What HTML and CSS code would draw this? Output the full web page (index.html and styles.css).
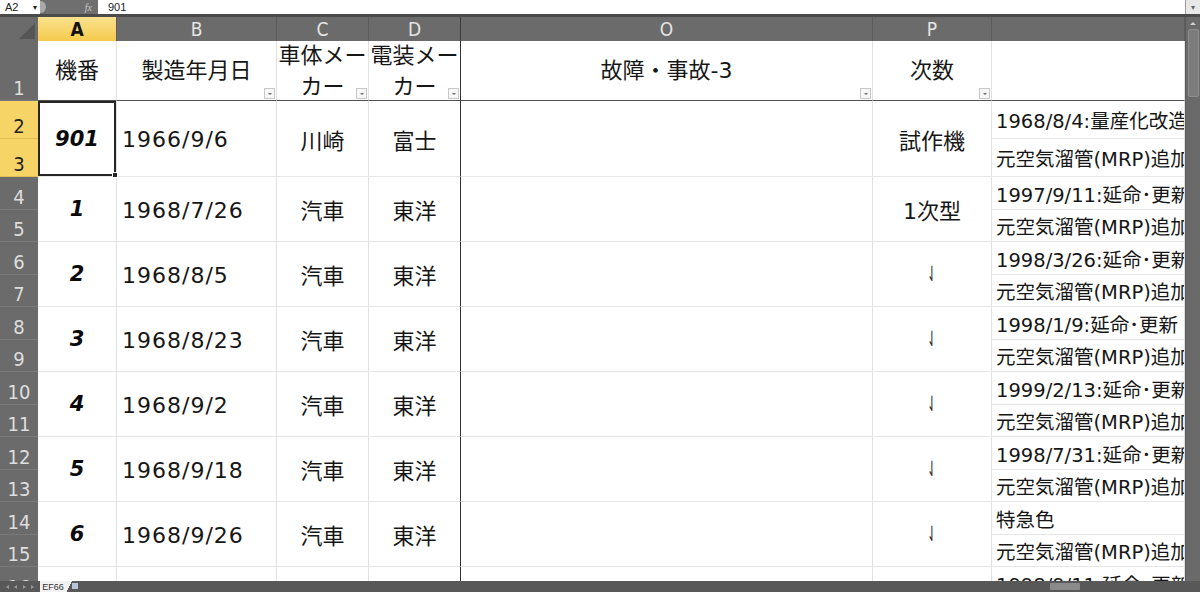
FILE: index.html
```html
<!DOCTYPE html>
<html lang="ja">
<head>
<meta charset="utf-8">
<title>EF66</title>
<link rel="stylesheet" href="styles.css">
</head>
<body>
<div class="app">
  <div class="fbar">
    <div class="namebox"><span>A2</span><span class="nb-arrow">▾</span></div>
    <div class="fxarea"><span class="knob"></span><span class="fx">fx</span></div>
    <div class="formula">901</div>
    <div class="fexpand"><span>▾</span></div>
  </div>
  <div class="main">
    <div class="sheet">
      <!-- column headers -->
      <div class="corner"></div>
      <div class="ch sel">A</div>
      <div class="ch">B</div>
      <div class="ch">C</div>
      <div class="ch chD">D</div>
      <div class="ch">O</div>
      <div class="ch">P</div>
      <div class="ch"></div>

      <!-- row 1 -->
      <div class="rh">1</div>
      <div class="c hdr">機番</div>
      <div class="c hdr">製造年月日<span class="flt"></span></div>
      <div class="c hdr">車体メー<br>カー<span class="flt"></span></div>
      <div class="c hdr sepD">電装メー<br>カー<span class="flt"></span></div>
      <div class="c hdr">故障・事故-3<span class="flt"></span></div>
      <div class="c hdr">次数<span class="flt"></span></div>
      <div class="c hdr"></div>

      <!-- rows 2-3 -->
      <div class="rh sel">2</div>
      <div class="c span2 ctr num sel-cell">901</div>
      <div class="c span2 left">1966/9/6</div>
      <div class="c span2 ctr">川崎</div>
      <div class="c span2 ctr sepD">富士</div>
      <div class="c span2"></div>
      <div class="c span2 ctr">試作機</div>
      <div class="c note">1968/8/4:量産化改造</div>
      <div class="rh sel last">3</div>
      <div class="c note">元空気溜管(MRP)追加</div>

      <!-- rows 4-5 -->
      <div class="rh">4</div>
      <div class="c span2 ctr num">1</div>
      <div class="c span2 left">1968/7/26</div>
      <div class="c span2 ctr">汽車</div>
      <div class="c span2 ctr sepD">東洋</div>
      <div class="c span2"></div>
      <div class="c span2 ctr">1次型</div>
      <div class="c note">1997/9/11:延命･更新</div>
      <div class="rh">5</div>
      <div class="c note">元空気溜管(MRP)追加</div>

      <!-- rows 6-7 -->
      <div class="rh">6</div>
      <div class="c span2 ctr num">2</div>
      <div class="c span2 left">1968/8/5</div>
      <div class="c span2 ctr">汽車</div>
      <div class="c span2 ctr sepD">東洋</div>
      <div class="c span2"></div>
      <div class="c span2 ctr"><span class="ditto">⇃</span></div>
      <div class="c note">1998/3/26:延命･更新</div>
      <div class="rh">7</div>
      <div class="c note">元空気溜管(MRP)追加</div>

      <!-- rows 8-9 -->
      <div class="rh">8</div>
      <div class="c span2 ctr num">3</div>
      <div class="c span2 left">1968/8/23</div>
      <div class="c span2 ctr">汽車</div>
      <div class="c span2 ctr sepD">東洋</div>
      <div class="c span2"></div>
      <div class="c span2 ctr"><span class="ditto">⇃</span></div>
      <div class="c note">1998/1/9:延命･更新</div>
      <div class="rh">9</div>
      <div class="c note">元空気溜管(MRP)追加</div>

      <!-- rows 10-11 -->
      <div class="rh">10</div>
      <div class="c span2 ctr num">4</div>
      <div class="c span2 left">1968/9/2</div>
      <div class="c span2 ctr">汽車</div>
      <div class="c span2 ctr sepD">東洋</div>
      <div class="c span2"></div>
      <div class="c span2 ctr"><span class="ditto">⇃</span></div>
      <div class="c note">1999/2/13:延命･更新</div>
      <div class="rh">11</div>
      <div class="c note">元空気溜管(MRP)追加</div>

      <!-- rows 12-13 -->
      <div class="rh">12</div>
      <div class="c span2 ctr num">5</div>
      <div class="c span2 left">1968/9/18</div>
      <div class="c span2 ctr">汽車</div>
      <div class="c span2 ctr sepD">東洋</div>
      <div class="c span2"></div>
      <div class="c span2 ctr"><span class="ditto">⇃</span></div>
      <div class="c note">1998/7/31:延命･更新</div>
      <div class="rh">13</div>
      <div class="c note">元空気溜管(MRP)追加</div>

      <!-- rows 14-15 -->
      <div class="rh">14</div>
      <div class="c span2 ctr num">6</div>
      <div class="c span2 left">1968/9/26</div>
      <div class="c span2 ctr">汽車</div>
      <div class="c span2 ctr sepD">東洋</div>
      <div class="c span2"></div>
      <div class="c span2 ctr"><span class="ditto">⇃</span></div>
      <div class="c note">特急色</div>
      <div class="rh">15</div>
      <div class="c note">元空気溜管(MRP)追加</div>

      <!-- rows 16-17 -->
      <div class="rh">16</div>
      <div class="c span2"></div>
      <div class="c span2"></div>
      <div class="c span2"></div>
      <div class="c span2 sepD"></div>
      <div class="c span2"></div>
      <div class="c span2"></div>
      <div class="c note">1998/9/11:延命･更新</div>
      <div class="rh">17</div>
      <div class="c note">元空気溜管(MRP)追加</div>
    </div>
    <div class="vscroll">
      <span class="up"></span>
      <span class="thumb"></span>
    </div>
  </div>
  <div class="tabs">
    <div class="tabnav"><span class="nv l"></span><span class="nv l"></span><span class="nv r"></span><span class="nv r"></span></div>
    <div class="tab">EF66</div>
    <div class="newsheet"></div>
    <div class="hspace"></div>
    <div class="hthumb"></div>
    <div class="hend"></div>
  </div>
</div>
</body>
</html>
```

FILE: styles.css
```css
html, body {
  margin: 0;
  padding: 0;
}
body {
  width: 1200px;
  height: 592px;
  overflow: hidden;
  background: #ffffff;
  font-family: "DejaVu Sans", "Noto Sans CJK JP", sans-serif;
  color: #161616;
}
.app {
  display: flex;
  flex-direction: column;
  width: 1200px;
  height: 592px;
}

/* formula bar */
.fbar {
  display: flex;
  height: 14px;
  border-bottom: 3px solid #4a4a4a;
  font: 11px "Liberation Sans", sans-serif;
  color: #222;
}
.namebox {
  width: 40px;
  box-sizing: border-box;
  padding: 0 3px 0 5px;
  display: flex;
  align-items: center;
  justify-content: space-between;
  background: #fff;
}
.nb-arrow {
  font-size: 8px;
}
.fxarea {
  width: 58px;
  background: #6f6f6f;
  position: relative;
  display: flex;
  align-items: center;
  justify-content: flex-end;
  padding-right: 6px;
  box-sizing: border-box;
  overflow: hidden;
}
.knob {
  position: absolute;
  left: -5px;
  top: 1px;
  width: 11px;
  height: 12px;
  border-radius: 50%;
  background: #a9a9a9;
}
.fx {
  font: italic 10px "Liberation Serif", serif;
  color: #c9c9c9;
}
.formula {
  flex: 1;
  background: #fff;
  padding-left: 10px;
  display: flex;
  align-items: center;
}
.fexpand {
  width: 14px;
  background: #e8e8e8;
  border-left: 1px solid #9a9a9a;
  display: flex;
  align-items: center;
  justify-content: center;
  font-size: 8px;
  color: #666;
}

/* main area */
.main {
  display: flex;
  height: 564px;
  overflow: hidden;
}
.sheet {
  width: 1185px;
  height: 564px;
  overflow: hidden;
  display: grid;
  grid-template-columns: 38px 79px 160px 92px 92px 412px 119px 193px;
  grid-template-rows: 24px 60px 38px 38px repeat(7, 33px 32px);
  align-content: start;
}

/* column headers */
.corner {
  background: #6b6b6b;
  position: relative;
}
.corner::after {
  content: "";
  position: absolute;
  right: 3px;
  bottom: 2px;
  width: 16px;
  height: 16px;
  background: #555555;
  clip-path: polygon(100% 0, 100% 100%, 0 100%);
}
.ch {
  background: #6b6b6b;
  color: #e4e4e4;
  font: 19px "Liberation Sans Narrow", "DejaVu Sans Condensed", sans-serif;
  line-height: 24px;
  text-align: center;
  border-right: 1px solid #5c5c5c;
  box-sizing: border-box;
}
.ch.sel {
  background: linear-gradient(#fbe190, #f4cb4c);
  color: #111;
  font-weight: bold;
}
.ch.chD {
  border-right-color: #3c3c3c;
}

/* row headers */
.rh {
  grid-column: 1;
  background: #6b6b6b;
  color: #dedede;
  font: 20px "Liberation Sans Narrow", "DejaVu Sans Condensed", sans-serif;
  display: flex;
  align-items: flex-end;
  justify-content: center;
  padding-bottom: 1px;
  box-sizing: border-box;
  border-bottom: 1px solid #7a7a7a;
  line-height: 22px;
}
.rh.sel {
  background: #f6d466;
  color: #222;
  border-bottom-color: #e2bd52;
}

/* cells */
.c {
  display: flex;
  align-items: center;
  position: relative;
  box-sizing: border-box;
  border-right: 1px solid #e1e1e1;
  border-bottom: 1px solid #e6e6e6;
  font-size: 22px;
  white-space: nowrap;
  overflow: hidden;
  color: #161616;
}
.span2 {
  grid-row: span 2;
}
.ctr {
  justify-content: center;
}
.left {
  padding-left: 5px;
  padding-top: 2px;
  letter-spacing: 1px;
}
.hdr {
  justify-content: center;
  text-align: center;
  line-height: 31px;
  border-bottom: 1px solid #505050;
  overflow: visible;
}
.sepD {
  border-right: 1px solid #333333;
}
.num {
  font: italic bold 21px "DejaVu Sans", sans-serif;
  color: #0a0a0a;
}
.sel-cell {
  box-shadow: inset 0 0 0 2px #262626;
  overflow: visible;
}
.sel-cell::after {
  content: "";
  position: absolute;
  right: -2px;
  bottom: -2px;
  width: 4px;
  height: 4px;
  background: #262626;
  border: 1px solid #fff;
  z-index: 2;
}
.ditto {
  display: inline-block;
  font: 21px "DejaVu Sans", sans-serif;
  color: #2a2a2a;
  transform: scaleX(0.55);
}
.note {
  font-size: 19.5px;
  padding-left: 4px;
  overflow: hidden;
}

/* filter buttons */
.flt {
  position: absolute;
  right: 1px;
  bottom: 1px;
  width: 9px;
  height: 9px;
  border: 1px solid #c8c8c8;
  background: #f7f7f7;
}
.flt::after {
  content: "";
  position: absolute;
  left: 3px;
  top: 4px;
  border-left: 2px solid transparent;
  border-right: 2px solid transparent;
  border-top: 2px solid #6a6a6a;
}

/* vertical scrollbar */
.vscroll {
  width: 15px;
  background: #6a6a6a;
  position: relative;
  border-left: 1px solid #5a5a5a;
  box-sizing: border-box;
}
.up {
  position: absolute;
  left: 4px;
  top: 5px;
  border-left: 3px solid transparent;
  border-right: 3px solid transparent;
  border-bottom: 3px solid #d0d0d0;
}
.thumb {
  position: absolute;
  left: 2px;
  top: 12px;
  width: 9px;
  height: 66px;
  border-radius: 2px;
  background: #7c7c7c;
  border: 1px solid #8f8f8f;
}

/* sheet tabs */
.tabs {
  height: 11px;
  background: #585858;
  display: flex;
  align-items: stretch;
}
.tabnav {
  width: 40px;
  display: flex;
  align-items: center;
  justify-content: space-around;
  padding: 0 3px;
  box-sizing: border-box;
}
.nv {
  width: 0;
  height: 0;
  border-top: 2px solid transparent;
  border-bottom: 2px solid transparent;
}
.nv.l {
  border-right: 3px solid #9a9a9a;
}
.nv.r {
  border-left: 3px solid #9a9a9a;
}
.tab {
  width: 26px;
  background: #f2f2f2;
  color: #333;
  font: 9px "Liberation Sans", sans-serif;
  display: flex;
  align-items: center;
  justify-content: center;
}
.newsheet {
  width: 14px;
  position: relative;
  background: linear-gradient(115deg, #f2f2f2 0 30%, #585858 30%);
}
.newsheet::after {
  content: "";
  position: absolute;
  left: 6px;
  top: 2px;
  width: 6px;
  height: 6px;
  background: #b8c4d8;
}
.hspace {
  flex: 1;
}
.hthumb {
  width: 30px;
  margin: 2px 0;
  background: #8a8a8a;
  border-radius: 1px;
}
.hend {
  width: 120px;
}
```
